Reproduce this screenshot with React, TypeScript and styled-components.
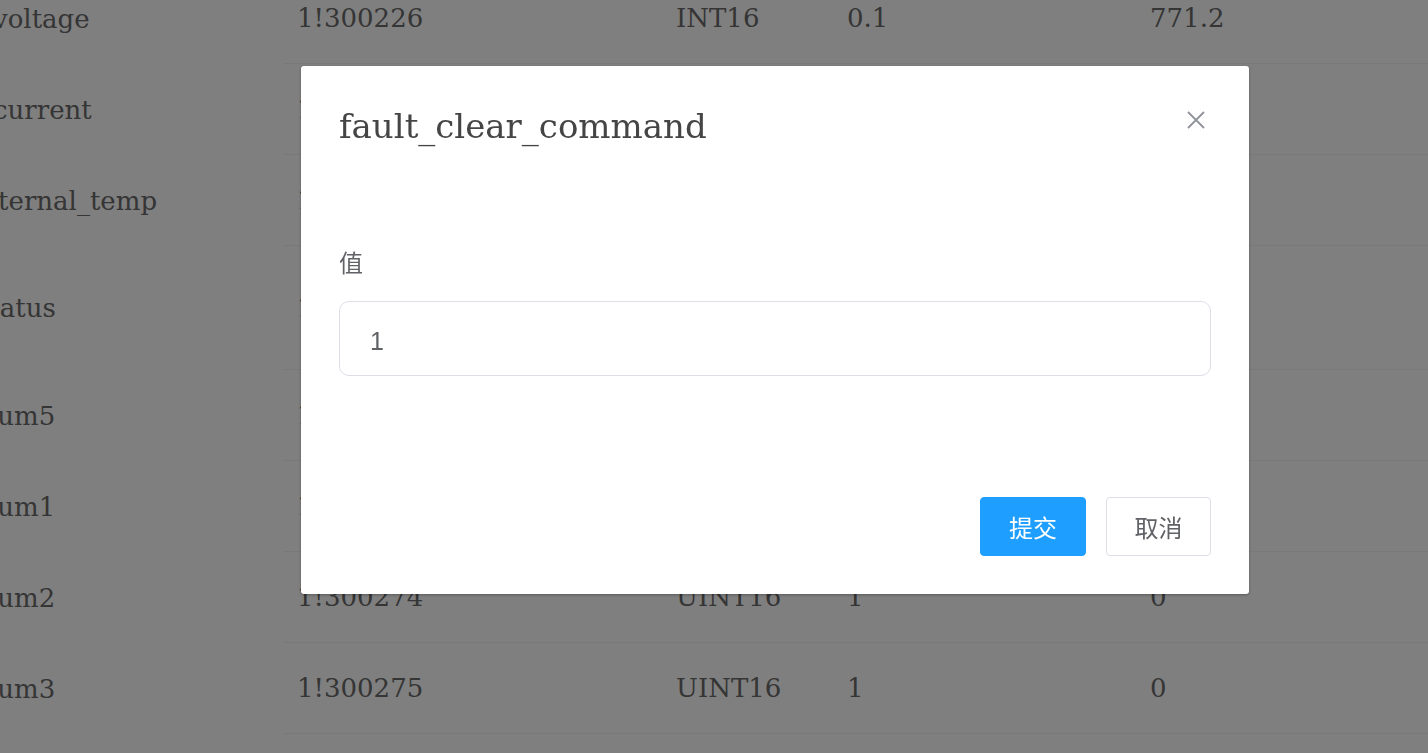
import React from "react";
import styled, { createGlobalStyle } from "styled-components";

const GlobalStyle = createGlobalStyle`
  html, body {
    margin: 0;
    padding: 0;
    background: #ffffff;
    overflow: hidden;
  }
  body {
    font-family: "DejaVu Serif", serif;
  }
  * { box-sizing: border-box; }
`;

const Page = styled.div`
  position: relative;
  width: 1428px;
  height: 753px;
  overflow: hidden;
`;

const Table = styled.div`
  display: flex;
  flex-direction: column;
  margin-top: -27px;
`;

const Row = styled.div<{ $tall?: boolean }>`
  display: grid;
  grid-template-columns: 283px 379px 171px 303px 1fr;
  height: ${(p) => (p.$tall ? 124 : 91)}px;
`;

const Cell = styled.div`
  display: flex;
  align-items: center;
  padding-left: 14px;
  border-bottom: 1px solid #f0f2f5;
  font-family: "DejaVu Serif", serif;
  font-size: 26px;
  color: #6a6a6a;
  white-space: nowrap;
  overflow: hidden;
`;

const NameCell = styled.div<{ $shift: number }>`
  display: flex;
  align-items: center;
  font-family: "DejaVu Serif", serif;
  font-size: 26px;
  color: #6a6a6a;
  white-space: nowrap;
  span {
    margin-left: ${(p) => p.$shift}px;
  }
`;

const Overlay = styled.div`
  position: fixed;
  inset: 0;
  background: rgba(0, 0, 0, 0.5);
  display: flex;
  align-items: flex-start;
  padding: 66px 0 0 301px;
`;

const Dialog = styled.div`
  width: 948px;
  background: #ffffff;
  border-radius: 3px;
  box-shadow: 0 1px 3px rgba(0, 0, 0, 0.3);
  display: flex;
  flex-direction: column;
  padding: 43px 38px 38px;
`;

const Header = styled.div`
  display: flex;
  justify-content: space-between;
  align-items: flex-start;
`;

const Title = styled.div`
  font-family: "DejaVu Serif", serif;
  font-size: 34px;
  line-height: 34px;
  color: #454545;
`;

const CloseButton = styled.button`
  border: none;
  background: transparent;
  padding: 0;
  margin: 2px 6px 0 0;
  width: 18px;
  height: 18px;
  display: flex;
  cursor: pointer;
`;

const Body = styled.div`
  display: flex;
  flex-direction: column;
  padding-top: 107px;
`;

const Label = styled.label`
  font-family: "Noto Sans CJK SC", sans-serif;
  font-size: 24px;
  line-height: 24px;
  color: #606266;
  margin-bottom: 27px;
`;

const Input = styled.input`
  height: 75px;
  width: 100%;
  border: 1px solid #dcdfe6;
  border-radius: 10px;
  padding: 6px 30px 0;
  font-family: "Liberation Sans", "Noto Sans CJK SC", sans-serif;
  font-size: 25px;
  color: #606266;
  outline: none;
  background: #ffffff;
`;

const Footer = styled.div`
  display: flex;
  justify-content: flex-end;
  gap: 20px;
  padding-top: 121px;
`;

const Button = styled.button<{ $primary?: boolean }>`
  height: 59px;
  width: ${(p) => (p.$primary ? 106 : 105)}px;
  border-radius: 4px;
  border: 1px solid ${(p) => (p.$primary ? "#1e9fff" : "#dcdfe6")};
  background: ${(p) => (p.$primary ? "#1e9fff" : "#ffffff")};
  color: ${(p) => (p.$primary ? "#ffffff" : "#606266")};
  font-family: "Noto Sans CJK SC", sans-serif;
  font-size: 24px;
  display: flex;
  align-items: center;
  justify-content: center;
  padding: 0;
  cursor: pointer;
`;

type RowData = {
  name: string;
  shift: number;
  addr: string;
  type: string;
  scale: string;
  value: string;
  tall?: boolean;
};

const rows: RowData[] = [
  { name: "voltage", shift: -7, addr: "1!300226", type: "INT16", scale: "0.1", value: "771.2" },
  { name: "current", shift: -7, addr: "1!300227", type: "INT16", scale: "0.1", value: "12.4" },
  { name: "internal_temp", shift: -27, addr: "1!300228", type: "INT16", scale: "0.1", value: "35.6" },
  { name: "status", shift: -24, addr: "1!300229", type: "UINT16", scale: "1", value: "0", tall: true },
  { name: "sum5", shift: -16, addr: "1!300277", type: "UINT16", scale: "1", value: "0" },
  { name: "sum1", shift: -16, addr: "1!300273", type: "UINT16", scale: "1", value: "0" },
  { name: "sum2", shift: -16, addr: "1!300274", type: "UINT16", scale: "1", value: "0" },
  { name: "sum3", shift: -16, addr: "1!300275", type: "UINT16", scale: "1", value: "0" },
];

export default function App() {
  return (
    <>
      <GlobalStyle />
      <Page>
        <Table>
          {rows.map((r) => (
            <Row key={r.name} $tall={r.tall}>
              <NameCell $shift={r.shift}>
                <span>{r.name}</span>
              </NameCell>
              <Cell>{r.addr}</Cell>
              <Cell>{r.type}</Cell>
              <Cell>{r.scale}</Cell>
              <Cell>{r.value}</Cell>
            </Row>
          ))}
        </Table>
        <Overlay>
          <Dialog>
            <Header>
              <Title>fault_clear_command</Title>
              <CloseButton aria-label="close">
                <svg width="18" height="18" viewBox="0 0 18 18">
                  <path d="M1 1 L17 17 M17 1 L1 17" stroke="#909399" strokeWidth="1.8" fill="none" />
                </svg>
              </CloseButton>
            </Header>
            <Body>
              <Label>值</Label>
              <Input defaultValue="1" />
            </Body>
            <Footer>
              <Button $primary>提交</Button>
              <Button>取消</Button>
            </Footer>
          </Dialog>
        </Overlay>
      </Page>
    </>
  );
}
